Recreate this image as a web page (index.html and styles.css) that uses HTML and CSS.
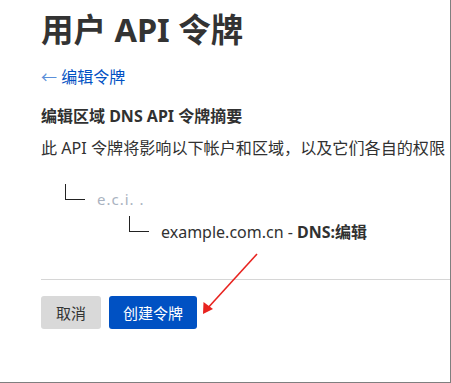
FILE: index.html
```html
<!DOCTYPE html>
<html lang="zh-CN">
<head>
  <meta charset="UTF-8">
  <meta name="viewport" content="width=device-width, initial-scale=1.0">
  <title>用户 API 令牌</title>
  <link rel="stylesheet" href="styles.css">
</head>
<body>
  <div class="page">
    <h1 class="page-title">用户 API 令牌</h1>
    <a class="back-link" href="#"><span class="back-arrow">←</span> 编辑令牌</a>

    <h2 class="summary-title">编辑区域 DNS API 令牌摘要</h2>
    <p class="summary-desc">此 API 令牌将影响以下帐户和区域，以及它们各自的权限</p>

    <div class="tree">
      <div class="tree-row level-1">
        <span class="corner"></span>
        <span class="account">e.c.i. .</span>
      </div>
      <div class="tree-row level-2">
        <span class="corner"></span>
        <span class="zone">example.com.cn - <strong>DNS:编辑</strong></span>
      </div>
    </div>

    <hr class="divider">

    <div class="actions">
      <button class="btn btn-cancel">取消</button>
      <button class="btn btn-primary">创建令牌</button>
    </div>

    <!-- 标注箭头 -->
    <svg class="arrow" width="451" height="383" viewBox="0 0 451 383">
      <line x1="257" y1="254" x2="206" y2="310" stroke="#e8231f" stroke-width="1.6"/>
      <polygon points="203,314 203.5,302 213,309" fill="#e8231f"/>
    </svg>
  </div>
</body>
</html>
```

FILE: styles.css
```css
* {
  margin: 0;
  padding: 0;
  box-sizing: border-box;
}
body {
  font-family: "Segoe UI", "Noto Sans", "Noto Sans CJK SC", sans-serif;
  color: #313131;
  background: #fff;
}
.page {
  position: relative;
  width: 451px;
  height: 383px;
  padding-left: 41px;
  border-right: 1px solid #7f7f7f;
  border-bottom: 1px solid #7f7f7f;
  overflow: hidden;
}
.page-title {
  font-size: 32.5px;
  font-weight: 700;
  line-height: 40px;
  margin-top: 10px;
  color: #333;
}
.back-link {
  display: block;
  margin-top: 17px;
  font-size: 16px;
  line-height: 20px;
  color: #0051c3;
  text-decoration: none;
}
.back-arrow {
  color: #5b8fd9;
}
.summary-title {
  margin-top: 19px;
  font-size: 16px;
  font-weight: 700;
  line-height: 20px;
}
.summary-desc {
  margin-top: 12px;
  font-size: 16.1px;
  line-height: 20px;
  white-space: nowrap;
}
.tree {
  margin-top: 26px;
  display: flex;
  flex-direction: column;
  gap: 16px;
}
.tree-row {
  display: flex;
  align-items: flex-end;
  height: 16px;
}
.tree-row.level-1 {
  padding-left: 24px;
}
.tree-row.level-2 {
  padding-left: 88px;
}
.corner {
  width: 20px;
  height: 16px;
  border-left: 1px solid #222;
  border-bottom: 1px solid #222;
  flex-shrink: 0;
}
.account {
  margin-left: 12px;
  margin-bottom: -9px;
  font-size: 15px;
  line-height: 20px;
  color: #a9b2c0;
  letter-spacing: 1px;
}
.zone {
  margin-left: 12px;
  margin-bottom: -10px;
  font-size: 16px;
  line-height: 20px;
}
.zone strong {
  font-weight: 700;
}
.divider {
  border: 0;
  height: 1px;
  background: #d6d6d6;
  margin-top: 47px;
}
.actions {
  display: flex;
  gap: 8px;
  margin-top: 16px;
}
.btn {
  height: 33px;
  border: none;
  border-radius: 3px;
  font-family: inherit;
  font-size: 15px;
  cursor: pointer;
}
.btn-cancel {
  width: 60px;
  background: #d9d9d9;
  color: #333;
}
.btn-primary {
  width: 88px;
  background: #0051c3;
  color: #fff;
}
.arrow {
  position: absolute;
  top: 0;
  left: 0;
  pointer-events: none;
}
```
